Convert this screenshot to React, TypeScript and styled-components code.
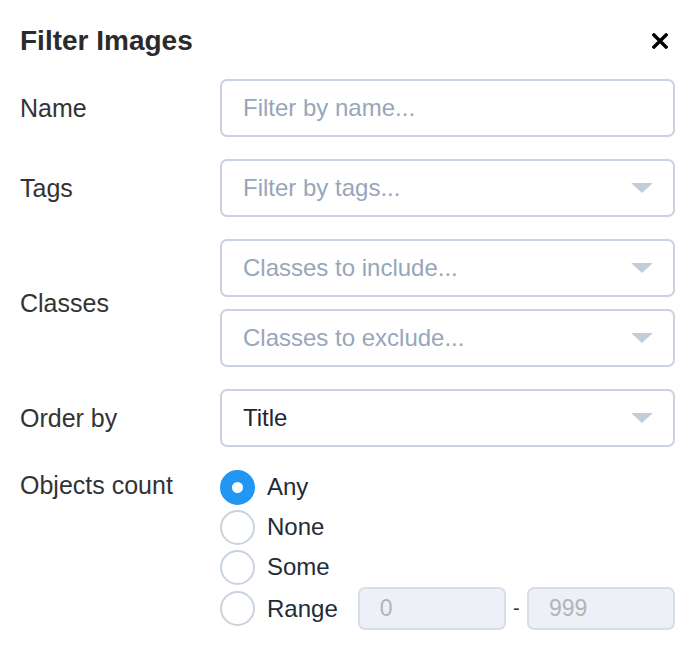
import React from "react";
import styled, { createGlobalStyle } from "styled-components";

const GlobalStyle = createGlobalStyle`
  body {
    margin: 0;
    background: #fff;
    font-family: "Liberation Sans", Arial, sans-serif;
  }
`;

const Panel = styled.div`
  width: 694px;
  padding: 24px 19px 20px 20px;
  box-sizing: border-box;
`;

const Header = styled.div`
  display: flex;
  justify-content: space-between;
  align-items: center;
  height: 34px;
  margin-bottom: 21px;
`;

const Title = styled.h2`
  margin: 0;
  font-size: 28px;
  font-weight: 700;
  color: #2b2b2b;
`;

const CloseButton = styled.button`
  border: none;
  background: none;
  padding: 0;
  margin-right: 7px;
  width: 16px;
  height: 16px;
  display: flex;
  cursor: pointer;
`;

const Row = styled.div<{ $top?: boolean; $gap?: number }>`
  display: grid;
  grid-template-columns: 200px 1fr;
  align-items: ${(p) => (p.$top ? "start" : "center")};
  margin-bottom: ${(p) => (p.$gap ?? 22)}px;
`;

const Label = styled.div<{ $top?: boolean }>`
  font-size: 25px;
  color: #333;
  padding-top: ${(p) => (p.$top ? "4px" : "0")};
`;

const Stack = styled.div`
  display: flex;
  flex-direction: column;
  gap: 12px;
`;

const Field = styled.div`
  height: 58px;
  box-sizing: border-box;
  border: 2px solid #c9d2df;
  border-radius: 7px;
  display: flex;
  align-items: center;
  justify-content: space-between;
  padding: 0 20px 0 21px;
`;

const FieldText = styled.span<{ $placeholder?: boolean }>`
  font-size: 24px;
  color: ${(p) => (p.$placeholder ? "#98a6ba" : "#1c2635")};
`;

const Caret = styled.span`
  width: 0;
  height: 0;
  border-left: 11px solid transparent;
  border-right: 11px solid transparent;
  border-top: 10px solid #c3ccd9;
`;

const RadioList = styled.div`
  display: flex;
  flex-direction: column;
`;

const RadioRow = styled.label`
  display: flex;
  align-items: center;
  min-height: 40px;
  gap: 12px;
  font-size: 24px;
  color: #222b38;
`;

const RadioDot = styled.span<{ $checked?: boolean }>`
  width: 35px;
  height: 35px;
  box-sizing: border-box;
  border-radius: 50%;
  flex: none;
  border: ${(p) => (p.$checked ? "12px solid #2196f3" : "2px solid #c9d2df")};
  background: #fff;
`;

const RangeBox = styled.div`
  display: flex;
  align-items: center;
  margin-left: 8px;
  flex: 1;
`;

const RangeInput = styled.div`
  flex: 1;
  height: 43px;
  box-sizing: border-box;
  border: 2px solid #d7dee8;
  border-radius: 7px;
  background: #edf1f7;
  display: flex;
  align-items: center;
  padding-left: 20px;
  font-size: 23px;
  color: #b4b4b4;
`;

const Dash = styled.span`
  width: 21px;
  text-align: center;
  font-size: 20px;
  color: #333;
`;

const Select = ({ text, placeholder }: { text: string; placeholder?: boolean }) => (
  <Field>
    <FieldText $placeholder={placeholder}>{text}</FieldText>
    <Caret />
  </Field>
);

export default function App() {
  return (
    <>
      <GlobalStyle />
      <Panel>
        <Header>
          <Title>Filter Images</Title>
          <CloseButton aria-label="close">
            <svg width="16" height="16" viewBox="0 0 16 16">
              <path d="M2 2L14 14M14 2L2 14" stroke="#000" strokeWidth="3.4" strokeLinecap="square" />
            </svg>
          </CloseButton>
        </Header>

        <Row>
          <Label>Name</Label>
          <Field>
            <FieldText $placeholder>Filter by name...</FieldText>
          </Field>
        </Row>

        <Row>
          <Label>Tags</Label>
          <Select text="Filter by tags..." placeholder />
        </Row>

        <Row>
          <Label>Classes</Label>
          <Stack>
            <Select text="Classes to include..." placeholder />
            <Select text="Classes to exclude..." placeholder />
          </Stack>
        </Row>

        <Row $gap={20}>
          <Label>Order by</Label>
          <Select text="Title" />
        </Row>

        <Row $top>
          <Label $top>Objects count</Label>
          <RadioList>
            <RadioRow>
              <RadioDot $checked />
              Any
            </RadioRow>
            <RadioRow>
              <RadioDot />
              None
            </RadioRow>
            <RadioRow>
              <RadioDot />
              Some
            </RadioRow>
            <RadioRow>
              <RadioDot />
              Range
              <RangeBox>
                <RangeInput>0</RangeInput>
                <Dash>-</Dash>
                <RangeInput>999</RangeInput>
              </RangeBox>
            </RadioRow>
          </RadioList>
        </Row>
      </Panel>
    </>
  );
}
